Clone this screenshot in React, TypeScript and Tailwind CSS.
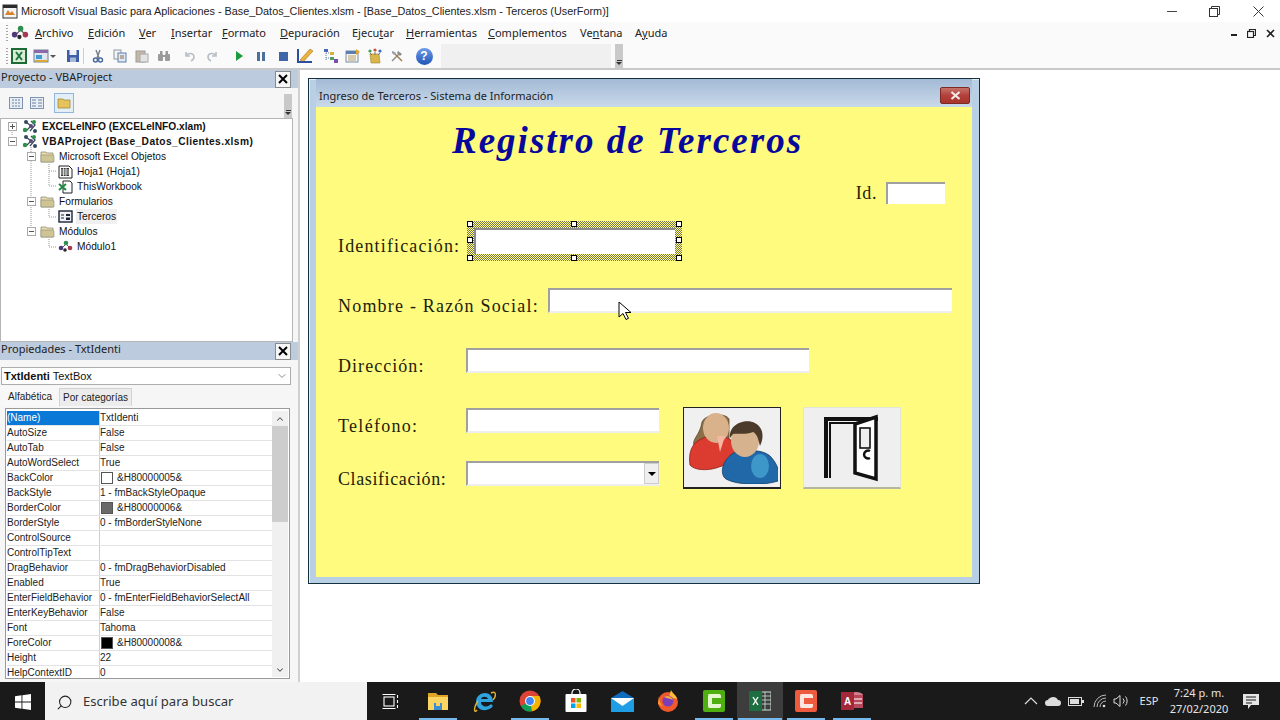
import type { ReactNode } from "react"
import { ChevronDown, ChevronUp, Search } from "lucide-react"

const ui = "font-['Noto_Sans',sans-serif]"
const tahoma = "font-['Liberation_Sans',sans-serif]"
const hand = "font-['Liberation_Serif',serif]"

const menus: [string, string, string][] = [
  ["", "A", "rchivo"],
  ["", "E", "dición"],
  ["", "V", "er"],
  ["", "I", "nsertar"],
  ["", "F", "ormato"],
  ["", "D", "epuración"],
  ["Ejecu", "t", "ar"],
  ["", "H", "erramientas"],
  ["", "C", "omplementos"],
  ["Ve", "n", "tana"],
  ["A", "y", "uda"],
]

const menuWidths = ["w-[53px]", "w-[51px]", "w-[32px]", "w-[51px]", "w-[58px]", "w-[72px]", "w-[54px]", "w-[82px]", "w-[92px]", "w-[55px]", "w-[40px]"]

const props: [string, string, string?][] = [
  ["AutoSize", "False"],
  ["AutoTab", "False"],
  ["AutoWordSelect", "True"],
  ["BackColor", "&H80000005&", "bg-white"],
  ["BackStyle", "1 - fmBackStyleOpaque"],
  ["BorderColor", "&H80000006&", "bg-[#696969]"],
  ["BorderStyle", "0 - fmBorderStyleNone"],
  ["ControlSource", ""],
  ["ControlTipText", ""],
  ["DragBehavior", "0 - fmDragBehaviorDisabled"],
  ["Enabled", "True"],
  ["EnterFieldBehavior", "0 - fmEnterFieldBehaviorSelectAll"],
  ["EnterKeyBehavior", "False"],
  ["Font", "Tahoma"],
  ["ForeColor", "&H80000008&", "bg-black"],
  ["Height", "22"],
  ["HelpContextID", "0"],
]

function ExcelIcon() {
  return (
    <svg width="16" height="16" viewBox="0 0 16 16">
      <rect x="1" y="1" width="14" height="14" fill="#d8ecd8" stroke="#1d6b35" strokeWidth="2" />
      <path d="M5 4l6 8M11 4l-6 8" stroke="#1d7a3a" strokeWidth="2" />
    </svg>
  )
}

function FormViewIcon() {
  return (
    <svg width="16" height="16" viewBox="0 0 16 16">
      <rect x="1" y="2" width="14" height="12" fill="#dfe6ee" stroke="#6d7f94" />
      <rect x="1" y="2" width="14" height="3" fill="#8c6aa8" />
      <rect x="3" y="7" width="6" height="4" fill="#3f9bd0" />
      <path d="M2 13h12" stroke="#d7a93a" strokeWidth="2" />
    </svg>
  )
}

function SaveIcon() {
  return (
    <svg width="14" height="14" viewBox="0 0 14 14">
      <rect x="1" y="1" width="12" height="12" fill="#3e5fa8" />
      <rect x="3.500" y="1" width="7" height="5" fill="#eef2f8" />
      <rect x="4" y="8.500" width="6" height="4.500" fill="#a9b8d6" />
    </svg>
  )
}

function CutIcon() {
  return (
    <svg width="14" height="14" viewBox="0 0 14 14" fill="none" stroke="#76808c">
      <path d="M5 1l3 8M9 1L6 9" strokeWidth="1.400" />
      <circle cx="4.500" cy="11" r="2" stroke="#4d6b9c" strokeWidth="1.500" />
      <circle cx="9.500" cy="11" r="2" stroke="#4d6b9c" strokeWidth="1.500" />
    </svg>
  )
}

function CopyIcon() {
  return (
    <svg width="14" height="14" viewBox="0 0 14 14">
      <rect x="1" y="1" width="7" height="9" fill="#f3f3f3" stroke="#8d98a6" />
      <rect x="5" y="4" width="8" height="9" fill="#dfe8f4" stroke="#5e7fa8" />
      <path d="M7 7h4M7 9h4" stroke="#9a6d3a" />
    </svg>
  )
}

function PasteIcon() {
  return (
    <svg width="14" height="14" viewBox="0 0 14 14">
      <rect x="1" y="2" width="9" height="11" fill="#c5b9a4" stroke="#9a9a9a" />
      <rect x="5" y="5" width="8" height="8" fill="#e3e3e3" stroke="#a8a8a8" />
    </svg>
  )
}

function FindIcon() {
  return (
    <svg width="14" height="14" viewBox="0 0 14 14" fill="#9b9b9b">
      <rect x="1" y="5" width="5" height="7" rx="1" />
      <rect x="8" y="5" width="5" height="7" rx="1" />
      <rect x="3" y="2" width="2.500" height="4" />
      <rect x="8.500" y="2" width="2.500" height="4" />
      <rect x="6" y="6" width="2" height="2" />
    </svg>
  )
}

function UndoIcon({ flip }: { flip?: boolean }) {
  return (
    <svg width="14" height="14" viewBox="0 0 14 14" fill="none" className={flip ? "-scale-x-100" : ""}>
      <path d="M3 3v4h4M3 7c2-4 8-3 8 1 0 2-1 3-3 4" stroke="#b9bfc7" strokeWidth="1.600" />
    </svg>
  )
}

function DesignIcon() {
  return (
    <svg width="20" height="18" viewBox="0 0 20 18">
      <path d="M2 2v13h15l-4-1H4V2z" fill="#2d4ea0" />
      <path d="M5 13L15 2l3 2L8 15z" fill="#e9b23a" stroke="#a8742a" strokeWidth="0.600" />
      <path d="M2 15h15" stroke="#2d4ea0" strokeWidth="2" />
    </svg>
  )
}

function ExplorerIcon() {
  return (
    <svg width="16" height="16" viewBox="0 0 16 16">
      <path d="M3 1v12M3 5h6M3 10h6" stroke="#6f7fae" strokeDasharray="1 1" fill="none" />
      <rect x="1" y="1" width="4" height="3" fill="#4868b8" />
      <rect x="7" y="4" width="4" height="3" fill="#d7b13a" />
      <rect x="7" y="9" width="4" height="3" fill="#4fa05a" />
      <rect x="11" y="11" width="4" height="4" fill="#7a4fb0" />
    </svg>
  )
}

function PropsIcon() {
  return (
    <svg width="16" height="16" viewBox="0 0 16 16">
      <rect x="1" y="3" width="12" height="11" fill="#f4f4f4" stroke="#7a8ea8" />
      <rect x="1" y="3" width="12" height="3" fill="#5b7fb2" />
      <path d="M3 8h8M3 10h8M3 12h8" stroke="#b8a26a" />
      <path d="M11 1l4 3-4 3z" fill="#e0a82e" />
    </svg>
  )
}

function ToolboxIcon() {
  return (
    <svg width="16" height="16" viewBox="0 0 16 16">
      <path d="M3 6h9l1 9H4z" fill="#d9b64a" stroke="#a3832f" strokeWidth="0.600" />
      <circle cx="3" cy="3" r="1.600" fill="#39a04f" />
      <circle cx="8" cy="2" r="1.600" fill="#d04b3f" />
      <circle cx="13" cy="3" r="1.600" fill="#3d6cc2" />
      <path d="M3 5l2 2M8 4v3M13 5l-2 2" stroke="#777" />
    </svg>
  )
}

function ToolsIcon() {
  return (
    <svg width="14" height="14" viewBox="0 0 14 14" fill="none" strokeWidth="1.400">
      <path d="M2 12L9 5" stroke="#8b8b8b" />
      <path d="M12 12L5 5" stroke="#a07a4a" />
      <path d="M8 2l4 3-2 2-3-3z" fill="#8b8b8b" stroke="none" />
      <path d="M2 2l3 1 1 2-2 1-2-2z" fill="#9a9fa8" stroke="none" />
    </svg>
  )
}

function HelpIcon() {
  return (
    <div className={`flex h-[17px] w-[17px] items-center justify-center rounded-full bg-gradient-to-b from-[#6f9ce6] to-[#1f55b8] text-[12px] font-bold text-white ${tahoma}`}>
      ?
    </div>
  )
}

function VbaIcon() {
  return (
    <svg width="17" height="15" viewBox="0 0 17 15">
      <path d="M4 3l5 4-5 5M9 2l4 4-5 6" stroke="#3d4a58" strokeWidth="1.300" fill="none" />
      <circle cx="4" cy="3" r="2" fill="#34495e" />
      <circle cx="12" cy="3" r="2" fill="#2f8f4e" />
      <circle cx="3" cy="11" r="2.200" fill="#2f8f4e" />
      <circle cx="9" cy="7" r="2" fill="#5a4a80" />
      <circle cx="13" cy="12" r="2" fill="#34495e" />
    </svg>
  )
}

function FolderIcon() {
  return (
    <svg width="15" height="13" viewBox="0 0 15 13">
      <path d="M1 4V2h5l1 1h6v9H1z" fill="#e8dcae" stroke="#8f8f7a" strokeWidth="0.800" />
      <path d="M1 5h12l1 1v6H1z" fill="#cfc493" stroke="#8f8f7a" strokeWidth="0.600" />
    </svg>
  )
}

function SheetIcon() {
  return (
    <svg width="15" height="14" viewBox="0 0 15 14">
      <path d="M1 1h10l3 3v9H1z" fill="#fff" stroke="#222" />
      <path d="M3 3h8v8H3z" fill="#3a3a3a" />
      <path d="M3 5h8M3 7h8M3 9h8M5.500 3v8M8 3v8" stroke="#fff" strokeWidth="0.700" />
    </svg>
  )
}

function BookIcon() {
  return (
    <svg width="15" height="14" viewBox="0 0 15 14">
      <path d="M5 1h7l2 2v10H5z" fill="#fff" stroke="#222" />
      <path d="M1 4l7 6M8 4l-7 6" stroke="#1f8a45" strokeWidth="2" />
    </svg>
  )
}

function FormIcon() {
  return (
    <svg width="15" height="13" viewBox="0 0 15 13">
      <rect x="1" y="1" width="13" height="11" fill="#f2f2f2" stroke="#16233a" strokeWidth="1.400" />
      <path d="M3 5h3M3 8h3" stroke="#16233a" />
      <rect x="8" y="4" width="4" height="2" fill="#16233a" />
      <rect x="8" y="7.500" width="4" height="2.500" fill="#16233a" />
    </svg>
  )
}

function ModuleIcon({ size = 15 }: { size?: number }) {
  return (
    <svg width={size} height={size * 0.87} viewBox="0 0 15 13">
      <path d="M3 9l5-5 5 5" stroke="#555" fill="none" />
      <circle cx="3" cy="8" r="2.300" fill="#4e3a7a" />
      <circle cx="8" cy="3" r="2.300" fill="#2f8f4e" />
      <circle cx="12" cy="8" r="2.300" fill="#a33b55" />
      <circle cx="7" cy="10" r="1.800" fill="#2a2a2a" />
    </svg>
  )
}

function Expander({ open }: { open?: boolean }) {
  return (
    <div className="relative h-[9px] w-[9px] border border-[#a9a9a9] bg-white">
      <div className="absolute left-[1px] top-[3px] h-px w-[5px] bg-[#555]" />
      {!open && <div className="absolute left-[3px] top-[1px] h-[5px] w-px bg-[#555]" />}
    </div>
  )
}

function TreeRow({ level, icon, text, bold, wide, expander, selected }: { level: number; icon: ReactNode; text: string; bold?: boolean; wide?: boolean; expander?: "open" | "closed"; selected?: boolean }) {
  const pad = ["pl-[7px]", "pl-[26px]", "pl-[40px]"][level]
  const gutter = ["w-[12px]", "w-[10px]", "w-[14px]"][level]
  return (
    <div className={`flex h-[15px] items-center ${pad}`}>
      <div className={`flex ${gutter} shrink-0 items-center`}>{expander && <Expander open={expander === "open"} />}</div>
      <div className="flex w-[20px] shrink-0 items-center justify-center">{icon}</div>
      <span className={`ml-[1px] whitespace-nowrap px-[1px] text-[10.2px] ${bold ? "font-bold" : ""} ${wide ? "tracking-[0.43px]" : ""} ${selected ? "bg-[#f0f0f0]" : ""}`}>{text}</span>
    </div>
  )
}

function PanelHeader({ title }: { title: string }) {
  return (
    <div className="flex h-[18px] items-center justify-between bg-[#bccbde] pl-[1px] pr-[7px]">
      <span className={`pb-[3px] text-[11px] text-[#222] ${ui}`}>{title}</span>
      <div className="flex h-[17px] w-[16px] items-center justify-center border border-[#8a8a8a] bg-[#f6f6f6]">
        <svg width="10" height="10" viewBox="0 0 10 10">
          <path d="M1 1l8 8M9 1l-8 8" stroke="#000" strokeWidth="2" />
        </svg>
      </div>
    </div>
  )
}

function Grip() {
  return (
    <div className="flex h-[24px] w-[8px] flex-col items-center justify-end bg-[#c9c9c9] pb-[3px]">
      <div className="mb-[1px] h-px w-[5px] bg-[#333]" />
      <div className="h-0 w-0 border-x-[3px] border-t-[3px] border-x-transparent border-t-[#333]" />
    </div>
  )
}

function DragDots() {
  return <div className="h-[16px] w-[2px] bg-[repeating-linear-gradient(to_bottom,#a5a5a5_0_1px,transparent_1px_3px)]" />
}

function ProjectPanel() {
  return (
    <div className="flex h-[272px] flex-col">
      <PanelHeader title="Proyecto - VBAProject" />
      <div className="flex h-[30px] items-center pl-[5px] pr-[6px]">
        <div className="flex h-[18px] w-[21px] items-center justify-center">
          <svg width="14" height="12" viewBox="0 0 14 12">
            <rect x="0.500" y="0.500" width="13" height="11" fill="#e8eef6" stroke="#7f93ad" />
            <path d="M3 3h8M3 6h8M3 9h8" stroke="#6d7f98" strokeDasharray="2 1" />
          </svg>
        </div>
        <div className="flex h-[18px] w-[21px] items-center justify-center">
          <svg width="14" height="12" viewBox="0 0 14 12">
            <rect x="0.500" y="0.500" width="13" height="11" fill="#e8eef6" stroke="#7f93ad" />
            <path d="M2 3h4M2 6h4M2 9h4M8 3h4M8 6h4M8 9h4" stroke="#6d7f98" />
          </svg>
        </div>
        <div className="ml-[7px] flex h-[20px] w-[20px] items-center justify-center border border-[#8fb8dc] bg-[#e4eef7]">
          <svg width="14" height="12" viewBox="0 0 14 12">
            <path d="M1 2h5l1 1h6v8H1z" fill="#e6c35c" stroke="#a58a35" strokeWidth="0.800" />
          </svg>
        </div>
        <div className="ml-auto self-end">
          <Grip />
        </div>
      </div>
      <div className={`relative mr-[5px] flex-1 border border-[#b5b5b5] bg-white text-[#111] ${tahoma}`}>
        <svg className="absolute left-0 top-0" width="100" height="135">
          <path d="M11 13v3M30 28v90M48 45v22M48 52h8M48 67h8M48 90v8M48 98h8M48 120v8M48 128h8" stroke="#999" strokeDasharray="1 1" fill="none" />
        </svg>
        <div className="relative">
          <TreeRow level={0} expander="closed" icon={<VbaIcon />} text="EXCELeINFO (EXCELeINFO.xlam)" bold />
          <TreeRow level={0} expander="open" icon={<VbaIcon />} text="VBAProject (Base_Datos_Clientes.xlsm)" bold wide />
          <TreeRow level={1} expander="open" icon={<FolderIcon />} text="Microsoft Excel Objetos" />
          <TreeRow level={2} icon={<SheetIcon />} text="Hoja1 (Hoja1)" />
          <TreeRow level={2} icon={<BookIcon />} text="ThisWorkbook" />
          <TreeRow level={1} expander="open" icon={<FolderIcon />} text="Formularios" />
          <TreeRow level={2} icon={<FormIcon />} text="Terceros" selected />
          <TreeRow level={1} expander="open" icon={<FolderIcon />} text="Módulos" />
          <TreeRow level={2} icon={<ModuleIcon />} text="Módulo1" />
        </div>
      </div>
    </div>
  )
}

function PropRow({ name, value, swatch }: { name: string; value: string; swatch?: string }) {
  return (
    <div className="flex h-[15px] border-b border-[#e3e3e3]">
      <div className="w-[93px] shrink-0 overflow-hidden whitespace-nowrap border-r border-[#cfcfcf] leading-[14px]">{name}</div>
      <div className="flex flex-1 items-center whitespace-nowrap leading-[14px]">
        {swatch && <div className={`ml-[1px] mr-[4px] h-[12px] w-[12px] border border-[#555] ${swatch}`} />}
        <span>{value}</span>
      </div>
    </div>
  )
}

function PropertiesPanel() {
  return (
    <div className="flex min-h-0 flex-1 flex-col">
      <PanelHeader title="Propiedades - TxtIdenti" />
      <div className={`ml-[1px] mr-[7px] mt-[7px] flex h-[18px] items-center justify-between border border-[#adadad] bg-white pl-[2px] pr-[2px] text-[11px] text-[#111] ${tahoma}`}>
        <span>
          <b>TxtIdenti</b> TextBox
        </span>
        <ChevronDown className="h-[12px] w-[12px] text-[#666]" strokeWidth={1.5} />
      </div>
      <div className={`ml-[1px] flex h-[21px] items-end text-[10px] text-[#222] ${tahoma}`}>
        <div className="flex h-[20px] w-[58px] items-center justify-center bg-[#f8f8f8]">Alfabética</div>
        <div className="flex h-[18px] w-[73px] items-center justify-center border border-b-0 border-[#d2d2d2] bg-[#ececec]">Por categorías</div>
      </div>
      <div className={`ml-[5px] mr-[8px] mt-[2px] flex h-[271px] overflow-hidden border border-[#9a9a9a] bg-white px-[1px] pb-[1px] pt-[2px] text-[10px] text-[#222] ${tahoma}`}>
        <div className="w-[265px] shrink-0">
          <div className="flex h-[15px] border-b border-[#e3e3e3]">
            <div className="w-[93px] shrink-0 border-r border-[#cfcfcf] bg-[#0a78d7] leading-[14px] text-white">(Name)</div>
            <div className="flex-1 leading-[14px]">TxtIdenti</div>
          </div>
          {props.map(([n, v, s]) => (
            <PropRow key={n} name={n} value={v} swatch={s} />
          ))}
        </div>
        <div className="flex flex-1 flex-col items-center bg-[#f0f0f0]">
          <div className="flex h-[15px] items-center">
            <ChevronUp className="h-[10px] w-[10px] text-[#555]" strokeWidth={2.5} />
          </div>
          <div className="h-[96px] w-full bg-[#cdcdcd]" />
          <div className="flex-1" />
          <div className="flex h-[15px] items-center">
            <ChevronDown className="h-[10px] w-[10px] text-[#555]" strokeWidth={2.5} />
          </div>
        </div>
      </div>
    </div>
  )
}

function FormLabel({ text, className }: { text: string; className: string }) {
  return <div className={`shrink-0 whitespace-nowrap text-[18px] leading-[24px] text-[#1d1d0a] ${className} ${hand}`}>{text}</div>
}

function TextBox({ width }: { width: string }) {
  return <div className={`h-[25px] ${width} border-y-2 border-l-2 border-b-[#eeeeee] border-l-[#a0a0a0] border-t-[#a0a0a0] bg-white`} />
}

function Handle({ pos }: { pos: string }) {
  return <div className={`absolute h-[6px] w-[6px] border border-black bg-white ${pos}`} />
}

function PeopleIcon() {
  return (
    <svg width="92" height="72" viewBox="0 0 92 72">
      <path d="M16 10c4-9 24-9 27-3v26H8c-2-6 6-10 8-23z" fill="#8c6f47" stroke="#5e4a30" strokeWidth="0.800" />
      <path d="M4 53c-3-22 10-28 26-30 15 1 22 10 27 24L30 56c-10 3-22 2-26-3z" fill="#dc3b30" stroke="#8a1f18" strokeWidth="0.800" />
      <ellipse cx="30" cy="16" rx="13" ry="15" fill="#d9b28c" />
      <path d="M31 24l8 0-5 16z" fill="#f5b7a3" />
      <path d="M40 67c-6-4-5-17 6-25 5-4 30-6 38 2 8 8 11 19 8 25-15 5-42 4-52-2z" fill="#2068a8" stroke="#123e6c" strokeWidth="0.800" />
      <ellipse cx="74" cy="54" rx="9" ry="12" fill="#3d97c8" />
      <ellipse cx="59" cy="29" rx="14" ry="16" fill="#d6b28f" />
      <path d="M44 26c-2-17 24-23 31-9 3 6 1 13-1 17-2-8-3-12-7-14-8 3-16 1-20 2-1 1-2 3-3 4z" fill="#4c3a2a" />
    </svg>
  )
}

function DoorIcon() {
  return (
    <svg width="60" height="68" viewBox="0 0 60 68">
      <path d="M4 64V5h52" fill="none" stroke="#111" strokeWidth="4" />
      <path d="M8 64V9h38" fill="none" stroke="#111" strokeWidth="2" />
      <path d="M33 10l21-7v62l-21-6z" fill="#fff" stroke="#111" strokeWidth="3.500" />
      <rect x="38" y="14" width="10" height="20" fill="#efefef" stroke="#111" strokeWidth="1.600" />
      <path d="M48 37a4 4 0 1 0 0 7" fill="none" stroke="#111" strokeWidth="2.500" />
    </svg>
  )
}

function UserForm() {
  return (
    <div className="ml-[8px] mt-[8px] flex h-[506px] w-[672px] flex-col border border-[#15313f] bg-[#b9d0e4] px-[7px] pb-[6px] shadow-[inset_1px_1px_0_#e6eef5]">
      <div className="flex h-[28px] shrink-0 items-center justify-between bg-gradient-to-b from-[#a3bad6] to-[#c9d9e9] pl-[3px] pr-[2px] pt-[5px]">
        <span className={`pt-[2px] text-[11px] text-[#222] ${ui}`}>Ingreso de Terceros - Sistema de Información</span>
        <div className="flex h-[17px] w-[30px] items-center justify-center rounded-[2px] border border-[#7c2a22] bg-gradient-to-b from-[#c4726a] via-[#b3403a] to-[#a8352c]">
          <svg width="11" height="9" viewBox="0 0 11 9">
            <path d="M1.500 1l8 7M9.500 1l-8 7" stroke="#f4e8e6" strokeWidth="2.200" />
          </svg>
        </div>
      </div>
      <div className="flex flex-1 flex-col bg-[#fffb7f] pl-[22px]">
        <div className={`flex h-[68px] items-center pl-[114px] text-[37px] font-bold italic tracking-[2px] text-[#08089c] ${hand}`}>Registro de Terceros</div>
        <div className="mt-[7px] flex h-[22px] items-start justify-end pr-[27px]">
          <span className={`mr-[9px] text-[18px] leading-[22px] tracking-[0.6px] text-[#1d1d0a] ${hand}`}>Id.</span>
          <div className="h-[22px] w-[59px] border-l-2 border-t-2 border-[#a0a0a0] bg-white" />
        </div>
        <div className="mt-[17px] flex h-[40px]">
          <FormLabel text="Identificación:" className="w-[129px] pt-[13px] tracking-[1.15px]" />
          <div className="relative h-[40px] w-[215px] bg-[#fffb7f] bg-[repeating-conic-gradient(#77775a_0_25%,transparent_0_50%)] bg-[length:2px_2px] p-[7px]">
            <div className="h-[26px] w-full border-l-2 border-t-2 border-[#8a8a8a] bg-white" />
            <Handle pos="left-0 top-0" />
            <Handle pos="left-[104px] top-0" />
            <Handle pos="right-0 top-0" />
            <Handle pos="left-0 top-[16px]" />
            <Handle pos="right-0 top-[16px]" />
            <Handle pos="left-0 bottom-0" />
            <Handle pos="left-[104px] bottom-0" />
            <Handle pos="right-0 bottom-0" />
          </div>
        </div>
        <div className="mt-[27px] flex h-[25px]">
          <FormLabel text="Nombre - Razón Social:" className="w-[210px] pt-[6px] tracking-[1.2px]" />
          <TextBox width="w-[404px]" />
        </div>
        <div className="mt-[35px] flex h-[25px]">
          <FormLabel text="Dirección:" className="w-[128px] pt-[6px] tracking-[1.05px]" />
          <TextBox width="w-[343px]" />
        </div>
        <div className="mt-[34px] flex">
          <div className="flex flex-col pt-[1px]">
            <div className="flex h-[25px]">
              <FormLabel text="Teléfono:" className="w-[128px] pt-[6px] tracking-[1.3px]" />
              <TextBox width="w-[193px]" />
            </div>
            <div className="mt-[28px] flex h-[25px]">
              <FormLabel text="Clasificación:" className="w-[128px] pt-[6px] tracking-[0.6px]" />
              <div className="flex h-[25px] w-[193px] justify-end border-y-2 border-l-2 border-b-[#eeeeee] border-l-[#a0a0a0] border-t-[#a0a0a0] bg-white">
                <div className="flex w-[15px] items-center justify-center border border-[#ccc] bg-[#efefef]">
                  <div className="h-0 w-0 border-x-[4px] border-t-[4px] border-x-transparent border-t-black" />
                </div>
              </div>
            </div>
          </div>
          <div className="ml-[24px] flex h-[82px] w-[98px] items-center justify-center border border-b-2 border-[#222] bg-[#f0f0f0]">
            <PeopleIcon />
          </div>
          <div className="ml-[22px] flex h-[82px] w-[98px] items-center justify-center border border-b-2 border-[#e4e4d8] border-b-[#b5b5a0] bg-[#efefef]">
            <DoorIcon />
          </div>
        </div>
      </div>
    </div>
  )
}

function TaskIcon({ children, highlighted, active }: { children?: ReactNode; highlighted?: boolean; active?: boolean }) {
  return (
    <div className={`flex h-[38px] w-[46px] flex-col items-center ${highlighted ? "bg-[#3d3d3d]" : ""}`}>
      <div className="flex h-[36px] items-center justify-center pt-[2px]">{children}</div>
      {active && <div className={`h-[2px] ${highlighted ? "w-[44px]" : "w-[38px]"} bg-[#76b9ed]`} />}
    </div>
  )
}

function Taskbar() {
  return (
    <div className="flex h-[38px] shrink-0 items-center bg-[#1a1a1a] text-white">
      <div className="flex h-full w-[45px] items-center justify-center pt-[2px]">
        <svg width="16" height="16" viewBox="0 0 16 16" fill="#fff">
          <path d="M0 2.200l6.500-.9v6.300H0zM7.400 1.200L16 0v7.600H7.400zM0 8.400h6.500v6.300L0 13.800zM7.400 8.400H16V16l-8.600-1.200z" />
        </svg>
      </div>
      <div className="flex h-full w-[322px] items-center bg-[#f2f2f2] pl-[11px] pt-[2px] text-[#333]">
        <Search className="h-[17px] w-[17px] -scale-x-100 text-[#222]" strokeWidth={1.5} />
        <span className={`ml-[10px] text-[13.1px] ${ui}`}>Escribe aquí para buscar</span>
      </div>
      <div className="flex h-full items-center">
        <TaskIcon>
          <svg width="17" height="17" viewBox="0 0 17 17" fill="none" stroke="#fff" strokeWidth="1.100">
            <rect x="2" y="4" width="10" height="9" />
            <path d="M0.500 1.500h13M0.500 15.500h13M15.500 2v3M15.500 7v3M15.500 12v3" />
          </svg>
        </TaskIcon>
        <div className="w-[2px]" />
        <TaskIcon active>
          <svg width="22" height="20" viewBox="0 0 22 20">
            <path d="M1 2h8l2 2h10v4H1z" fill="#e0a526" />
            <path d="M1 6h20v13H1z" fill="#fcd462" />
            <rect x="7" y="12" width="8" height="7" fill="#3d8ed0" />
            <rect x="9" y="12" width="4" height="3" fill="#fcd462" />
          </svg>
        </TaskIcon>
        <TaskIcon>
          <svg width="23" height="23" viewBox="0 0 23 23">
            <path d="M3 12C3 6 8 3 12 3c5 0 8 4 8 9H8c0 5 7 6 10 2l2 2c-3 5-13 6-16 0-1-1-1-3-1-4zM8 9h7c-1-3-6-3-7 0z" fill="#2fa2e0" />
            <path d="M4 20C1 24 0 18 5 11M18 3c6-3 5 4 2 7" fill="none" stroke="#e4b32e" strokeWidth="1.400" />
          </svg>
        </TaskIcon>
        <TaskIcon active>
          <svg width="22" height="22" viewBox="0 0 22 22">
            <circle cx="11" cy="11" r="10.500" fill="#db4437" />
            <path d="M11 11L2 16a10.500 10.500 0 0 0 11 5.300z" fill="#0f9d58" />
            <path d="M11 6h9.400A10.500 10.500 0 0 1 13 21.300L11 11z" fill="#f4b400" />
            <circle cx="11" cy="11" r="5" fill="#fff" />
            <circle cx="11" cy="11" r="3.900" fill="#4285f4" />
          </svg>
        </TaskIcon>
        <TaskIcon>
          <svg width="22" height="24" viewBox="0 0 22 24">
            <path d="M7 6V4a4 4 0 0 1 8 0v2" fill="none" stroke="#fff" strokeWidth="1.200" />
            <rect x="0.500" y="5" width="21" height="18" rx="1" fill="#fff" />
            <rect x="6" y="9" width="4.500" height="4.500" fill="#f25022" />
            <rect x="11.500" y="9" width="4.500" height="4.500" fill="#7fba00" />
            <rect x="6" y="14.500" width="4.500" height="4.500" fill="#00a4ef" />
            <rect x="11.500" y="14.500" width="4.500" height="4.500" fill="#ffb900" />
          </svg>
        </TaskIcon>
        <TaskIcon>
          <svg width="23" height="21" viewBox="0 0 23 21">
            <path d="M0 7l11.500-7L23 7v14H0z" fill="#0f6cbd" />
            <path d="M0 7h23v14H0z" fill="#1f9ee6" />
            <path d="M0 7l11.500 8L23 7z" fill="#fff" />
          </svg>
        </TaskIcon>
        <TaskIcon>
          <svg width="22" height="22" viewBox="0 0 22 22">
            <circle cx="11" cy="12" r="10" fill="#f0592b" />
            <path d="M14 0c1 3 5 5 6 9L12 7z" fill="#ffbf3a" />
            <path d="M2 6c0 5 2 9 5 11l-6-3z" fill="#ff9a2e" />
            <circle cx="11" cy="11" r="5.500" fill="#7a3fb8" />
            <path d="M7 7c3-2 8-1 9 3-3-2-6-1-9-3z" fill="#ffa436" />
          </svg>
        </TaskIcon>
        <TaskIcon active>
          <div className="flex h-[22px] w-[22px] items-center justify-center rounded-[2px] bg-[#4fae10]">
            <div className="h-[14px] w-[13px] rounded-[2px] border-y-[4px] border-l-[4px] border-[#e6f6d0]" />
          </div>
        </TaskIcon>
        <TaskIcon active highlighted>
          <svg width="22" height="20" viewBox="0 0 22 20">
            <rect x="10" y="1" width="12" height="18" fill="none" stroke="#cfe3d6" />
            <path d="M10 5h12M10 9h12M10 13h12M16 1v18" stroke="#cfe3d6" strokeWidth="0.800" />
            <rect x="0" y="0" width="13" height="20" fill="#1d6f42" />
            <path d="M4 6l5 8M9 6l-5 8" stroke="#fff" strokeWidth="1.400" />
          </svg>
        </TaskIcon>
        <TaskIcon active>
          <div className="flex h-[22px] w-[22px] items-center justify-center rounded-[2px] bg-[#ee5a3e]">
            <div className="h-[14px] w-[13px] rounded-[2px] border-y-[4px] border-l-[4px] border-[#fde6df]" />
          </div>
        </TaskIcon>
        <TaskIcon active>
          <svg width="22" height="20" viewBox="0 0 22 20">
            <ellipse cx="15" cy="4" rx="7" ry="3" fill="#d77c8c" />
            <rect x="8" y="4" width="14" height="13" fill="#b7485c" />
            <path d="M10 8h11M10 12h11" stroke="#eec7cf" strokeWidth="1.400" />
            <rect x="0" y="1" width="13" height="18" fill="#a4273a" />
            <text x="6.500" y="14" fontSize="10" fontWeight="700" fill="#fff" textAnchor="middle" fontFamily="Liberation Sans">A</text>
          </svg>
        </TaskIcon>
      </div>
      <div className={`ml-auto flex h-full items-center pr-[21px] text-[11px] ${ui}`}>
        <svg width="14" height="8" viewBox="0 0 14 8" fill="none" stroke="#ddd" strokeWidth="1.200">
          <path d="M1 7l6-6 6 6" />
        </svg>
        <svg className="ml-[7px]" width="16" height="10" viewBox="0 0 16 10" fill="#ddd">
          <path d="M3 10a3 3 0 0 1 0-6c1-3 8-5 10 0a3 3 0 0 1 0 6z" />
        </svg>
        <svg className="ml-[7px]" width="16" height="9" viewBox="0 0 16 9">
          <rect x="0.500" y="0.500" width="13" height="8" fill="none" stroke="#ddd" />
          <rect x="2" y="2" width="9" height="5" fill="#ddd" />
          <rect x="14" y="3" width="2" height="3" fill="#ddd" />
        </svg>
        <svg className="ml-[9px]" width="14" height="14" viewBox="0 0 14 14" fill="none" stroke="#bbb">
          <path d="M1 13a12 12 0 0 1 12-12M4 13a9 9 0 0 1 9-9M7 13a6 6 0 0 1 6-6" />
          <circle cx="11" cy="12" r="1.300" fill="#ddd" stroke="none" />
        </svg>
        <svg className="ml-[6px]" width="16" height="14" viewBox="0 0 16 14" fill="none" stroke="#ddd">
          <path d="M1 5h2l4-3.500v11L3 9H1zM10 4.500a3.500 3.500 0 0 1 0 5M12.500 2.500a7 7 0 0 1 0 9" />
        </svg>
        <span className="ml-[8px] w-[24px] text-center text-[#e5e5e5]">ESP</span>
        <div className="ml-[3px] flex w-[70px] flex-col items-center leading-[16px] text-[#e5e5e5]">
          <span>7:24 p. m.</span>
          <span>27/02/2020</span>
        </div>
        <svg className="ml-[9px]" width="16" height="15" viewBox="0 0 16 15">
          <path d="M0 0h16v11H8l-3 4v-4H0z" fill="#e5e5e5" />
          <path d="M3 3h10M3 6h10M3 9h6" stroke="#1a1a1a" />
        </svg>
      </div>
    </div>
  )
}

export default function App() {
  return (
    <div className="flex h-[720px] w-[1280px] flex-col overflow-hidden bg-white">
      <div className="flex h-[22px] shrink-0 items-center bg-white pl-[2px]">
        <svg width="16" height="16" viewBox="0 0 16 16">
          <rect x="1" y="2" width="14" height="13" fill="#f4f4f4" stroke="#333" />
          <rect x="1" y="2" width="14" height="3" fill="#2b2b2b" />
          <path d="M3 12l3-5 2 3 2-2 3 4z" fill="#d9822b" />
        </svg>
        <span className={`ml-[3px] whitespace-nowrap text-[10.85px] text-[#222] ${tahoma}`}>Microsoft Visual Basic para Aplicaciones - Base_Datos_Clientes.xlsm - [Base_Datos_Clientes.xlsm - Terceros (UserForm)]</span>
        <div className="ml-auto flex items-center">
          <div className="flex w-[42px] justify-center">
            <div className="h-px w-[10px] bg-[#444]" />
          </div>
          <div className="flex w-[43px] justify-center">
            <svg width="11" height="11" viewBox="0 0 11 11" fill="none" stroke="#333">
              <rect x="0.500" y="2.500" width="8" height="8" fill="#fff" />
              <path d="M2.500 2.500v-2h8v8h-2" />
            </svg>
          </div>
          <div className="flex w-[44px] justify-center">
            <svg width="11" height="11" viewBox="0 0 11 11" stroke="#333">
              <path d="M0.500 0.500l10 10M10.500 0.500l-10 10" />
            </svg>
          </div>
        </div>
      </div>
      <div className="flex h-[22px] shrink-0 items-center bg-[#fafafa] pl-[6px] text-[#222]">
        <DragDots />
        <div className="ml-[3px]">
          <ModuleIcon size={18} />
        </div>
        <div className={`ml-[6px] flex text-[11px] ${ui}`}>
          {menus.map(([pre, key, post], i) => (
            <span key={key + post} className={`${menuWidths[i]} whitespace-nowrap`}>
              {pre}
              <u>{key}</u>
              {post}
            </span>
          ))}
        </div>
        <div className="ml-auto flex items-center pr-[5px]">
          <div className="h-[2px] w-[6px] translate-y-[2px] bg-[#222]" />
          <div className="ml-[9px] flex w-[10px] justify-center">
            <svg width="9" height="9" viewBox="0 0 9 9" fill="none" stroke="#222" strokeWidth="1.200">
              <rect x="0.500" y="2.500" width="6" height="6" fill="#fafafa" />
              <path d="M2.500 2v-1.500h6v6h-1.500" />
            </svg>
          </div>
          <div className="ml-[9px] flex w-[10px] justify-center">
            <svg width="9" height="9" viewBox="0 0 9 9" stroke="#222" strokeWidth="1.600">
              <path d="M1 1l7 7M8 1l-7 7" />
            </svg>
          </div>
        </div>
      </div>
      <div className="flex h-[26px] shrink-0 items-center border-b-2 border-[#c9c9c9] bg-[#fafafa] pl-[6px]">
        <DragDots />
        <div className="flex w-[22px] justify-center"><ExcelIcon /></div>
        <div className="flex w-[28px] items-center justify-center">
          <FormViewIcon />
          <div className="ml-[1px] h-0 w-0 border-x-[3px] border-t-[3px] border-x-transparent border-t-[#555]" />
        </div>
        <div className="ml-[7px] flex w-[15px] justify-center"><SaveIcon /></div>
        <div className="mx-[3px] h-[16px] w-px bg-[#cfcfcf]" />
        <div className="flex w-[22px] justify-center"><CutIcon /></div>
        <div className="flex w-[22px] justify-center"><CopyIcon /></div>
        <div className="flex w-[22px] justify-center"><PasteIcon /></div>
        <div className="flex w-[22px] justify-center"><FindIcon /></div>
        <div className="flex w-[30px] justify-center"><UndoIcon /></div>
        <div className="flex w-[14px] justify-center"><UndoIcon flip /></div>
        <div className="flex w-[31px] justify-center pl-[9px]">
          <div className="h-0 w-0 border-y-[5px] border-l-[7px] border-y-transparent border-l-[#1d9a3c]" />
        </div>
        <div className="flex w-[22px] justify-center gap-[2px]">
          <div className="h-[9px] w-[3px] bg-[#4d6f9c]" />
          <div className="h-[9px] w-[3px] bg-[#4d6f9c]" />
        </div>
        <div className="flex w-[22px] justify-center"><div className="h-[9px] w-[9px] bg-[#3f66a8]" /></div>
        <div className="flex w-[22px] justify-center"><DesignIcon /></div>
        <div className="flex w-[26px] justify-center pl-[4px]"><ExplorerIcon /></div>
        <div className="flex w-[22px] justify-center"><PropsIcon /></div>
        <div className="flex w-[22px] justify-center"><ToolboxIcon /></div>
        <div className="flex w-[22px] justify-center"><ToolsIcon /></div>
        <div className="flex w-[32px] justify-center"><HelpIcon /></div>
        <div className="ml-[1px] h-[24px] w-[170px] bg-[#f0f0f0]" />
        <div className="ml-[4px]"><Grip /></div>
      </div>
      <div className="relative flex min-h-0 flex-1">
        <div className="flex w-[300px] shrink-0 flex-col border-r-2 border-[#d0d0d0] bg-[#f6f6f6]">
          <ProjectPanel />
          <PropertiesPanel />
        </div>
        <UserForm />
        <svg className="absolute left-[618px] top-[231px]" width="14" height="20" viewBox="0 0 14 20">
          <path d="M1 1v15l4-3.500 3 6 2.500-1.200-3-5.800h5.500z" fill="#fff" stroke="#000" />
        </svg>
      </div>
      <Taskbar />
    </div>
  )
}
